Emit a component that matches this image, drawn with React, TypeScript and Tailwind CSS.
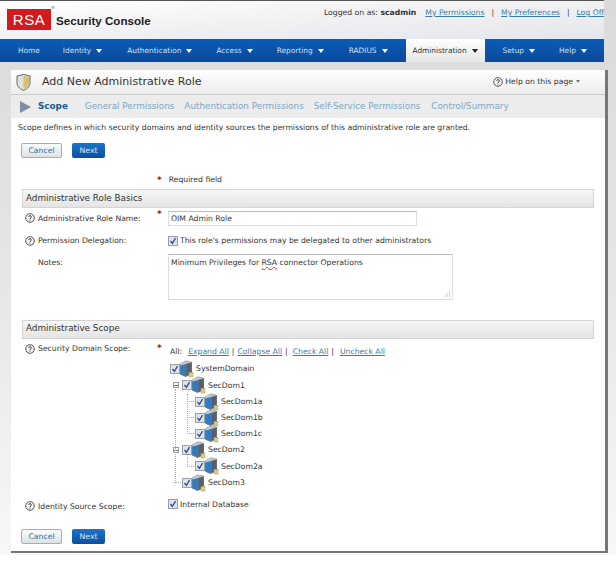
const font = "font-['DejaVu_Sans',Verdana,sans-serif]";

function Caret({ dark }: { dark?: boolean }) {
  return (
    <svg width="6" height="4" viewBox="0 0 6 4" className="ml-[5px]">
      <path d="M0 0h6L3 4z" fill={dark ? "#222" : "#fff"} />
    </svg>
  );
}

function NavItem({ label, caret = true, className }: { label: string; caret?: boolean; className: string }) {
  return (
    <div className={`flex items-center text-[7.4px] text-[#cfe0f2] ${className}`}>
      {label}
      {caret && <Caret />}
    </div>
  );
}

function HelpIcon() {
  return (
    <svg width="10" height="10" viewBox="0 0 10 10" className="shrink-0">
      <circle cx="5" cy="5" r="4.3" fill="#f4f4f4" stroke="#555" strokeWidth="1" />
      <path d="M3.6 3.8C3.7 2.3 6.4 2.3 6.4 3.8 6.4 4.8 5 4.8 5 6" fill="none" stroke="#444" strokeWidth="1" />
      <rect x="4.5" y="6.7" width="1" height="1" fill="#444" />
    </svg>
  );
}

function Check() {
  return (
    <span className="flex h-[10px] w-[10px] shrink-0 items-center justify-center border border-[#9a9ea5] bg-[#dfe3e8]">
      <svg width="8" height="8" viewBox="0 0 8 8">
        <path d="M1.500 4 3.400 6.400 6.500 1.200" fill="none" stroke="#2a4aa0" strokeWidth="1.300" />
      </svg>
    </span>
  );
}

function ServerIcon() {
  return (
    <svg width="15" height="18" viewBox="0 0 15 18" className="shrink-0 -ml-px">
      <path d="M1 3.500 7 0.500 13 2V14L6.500 17 1 14.500z" fill="#747b84" />
      <path d="M1.500 5.500 7 3.500V16L1.500 14z" fill="#2c7cc6" />
      <path d="M1 3.500 7 1 12.500 2.300 7 4 1.500 5.500z" fill="#c3c9cf" />
      <path d="M7.500 4 12.500 2.800V13.500L7.500 16z" fill="#59606a" />
      <rect x="10" y="12.500" width="4" height="4.500" fill="#ddcb8c" stroke="#a8985e" strokeWidth="0.500" />
    </svg>
  );
}

function Button({ label, primary }: { label: string; primary?: boolean }) {
  if (primary) {
    return (
      <div className="flex h-[15px] w-[33px] items-center justify-center rounded-[2px] bg-gradient-to-b from-[#1c74c9] to-[#0a4f9f] text-[7.7px] text-[#dce9f7]">
        {label}
      </div>
    );
  }
  return (
    <div className="flex h-[15px] w-[41px] items-center justify-center rounded-[2px] border border-[#a9adb0] bg-gradient-to-b from-[#fafafa] to-[#dfe2e4] text-[7.7px] text-[#2f6f9f]">
      {label}
    </div>
  );
}

function SectionBar({ title }: { title: string }) {
  return (
    <div className="ml-[11px] flex h-[19px] w-[572px] items-center border border-[#d4d4d4] bg-gradient-to-b from-[#f6f6f6] to-[#e4e4e4] pl-[3px] text-[8.8px] text-[#333]">
      {title}
    </div>
  );
}

function Star() {
  return <span className="text-[9px] leading-none font-bold text-[#9c1c1c]">*</span>;
}

function TreeRow({ label, indent, toggle, line }: { label: string; indent: string; toggle?: boolean; line?: boolean }) {
  return (
    <div className={`flex h-[16.2px] items-center ${indent}`}>
      {line && <span className="mr-[1px] w-[7px] border-t border-dotted border-[#aaa]" />}
      {toggle && (
        <span className="mr-[3px] flex h-[6px] w-[6px] items-center justify-center border border-[#999] bg-white">
          <span className="h-px w-[4px] bg-[#666]" />
        </span>
      )}
      <Check />
      <ServerIcon />
      <span className="ml-[2px] text-[7.700px] text-[#333]">{label}</span>
    </div>
  );
}

export default function App() {
  return (
    <div className={`${font} h-[565px] w-[616px] overflow-hidden bg-gradient-to-b from-[#dadada] via-[#e6e6e6] to-[#f8f8f8] text-[#333]`}>
      <div className="h-[39px] w-[604px] border-t border-[#555] bg-gradient-to-br from-white via-[#f1f1f3] to-[#e4e6ed]">
        <div className="flex h-full">
          <div className="ml-[7px] mt-[8px] flex h-[21px] w-[44px] items-center justify-center bg-[#d41a1f] font-['Liberation_Sans',Arial,sans-serif] text-[15px] leading-none tracking-[0.5px] text-white">
            RSA
          </div>
          <div className="mt-[5px] text-[4px] leading-none text-[#555]">®</div>
          <div className="ml-[1px] mt-[11px] font-['Liberation_Sans',Arial,sans-serif] text-[11.6px] font-bold text-[#222]">
            Security Console
          </div>
          <div className="ml-auto mt-[6px] flex gap-[7px] text-[7.7px] whitespace-nowrap">
            <span>
              Logged on as: <b>scadmin</b>
            </span>
            <span className="ml-[2px] text-[#3a7ca8] underline">My Permissions</span>
            <span>|</span>
            <span className="text-[#3a7ca8] underline">My Preferences</span>
            <span>|</span>
            <span className="text-[#3a7ca8] underline">Log Off</span>
          </div>
        </div>
      </div>

      <div className="flex h-[23px] w-[604px] bg-gradient-to-b from-[#0a5cb8] to-[#0b4a9a]">
        <NavItem label="Home" caret={false} className="ml-[18px]" />
        <NavItem label="Identity" className="ml-[23px]" />
        <NavItem label="Authentication" className="ml-[25px]" />
        <NavItem label="Access" className="ml-[24px]" />
        <NavItem label="Reporting" className="ml-[24px]" />
        <NavItem label="RADIUS" className="ml-[25px]" />
        <div className="ml-[18px] flex w-[79px] items-center justify-center bg-gradient-to-b from-white to-[#e6e6e6] text-[7.4px] text-[#333]">
          Administration
          <Caret dark />
        </div>
        <NavItem label="Setup" className="ml-[18px]" />
        <NavItem label="Help" className="ml-[24px]" />
      </div>

      <div className="pt-[8px] pl-[11px]">
        <div className="h-[483px] w-[597px] border-b-2 border-r-[3px] border-[#777] bg-white">
          <div className="flex h-[24px] items-center bg-gradient-to-b from-white to-[#ececec] pl-[5px] pr-[25px]">
            <svg width="15" height="17" viewBox="0 0 15 17">
              <path d="M1 2 7.500 0.500 14 2V9C14 13 10 15.500 7.500 16.500 5 15.500 1 13 1 9z" fill="#dfe1dd" stroke="#666" />
              <path d="M7.500 2 13 3V9C13 12 10 14.500 7.500 15.500z" fill="#d9c26e" />
            </svg>
            <span className="ml-[11px] text-[11px] text-[#333]">Add New Administrative Role</span>
            <div className="ml-auto flex items-center gap-[2px] text-[7.700px]">
              <HelpIcon />
              Help on this page
              <svg width="4" height="3" viewBox="0 0 4 3" className="ml-[1px]">
                <path d="M0 0h4L2 3z" fill="#777" />
              </svg>
            </div>
          </div>
          <div className="flex h-[24px] items-center border-t border-[#ccc] bg-[#ececec] pl-[9px] text-[8.800px] whitespace-nowrap text-[#7ba8c7]">
            <svg width="11" height="12" viewBox="0 0 11 12">
              <path d="M0 0 11 6 0 12z" fill="#7d8fa3" />
            </svg>
            <span className="ml-[7px] font-bold text-[#175b94]">Scope</span>
            <span className="ml-[17px]">General Permissions</span>
            <span className="ml-[10px]">Authentication Permissions</span>
            <span className="ml-[10px]">Self-Service Permissions</span>
            <span className="ml-[11px]">Control/Summary</span>
          </div>

          <div className="pl-[7px] pt-[4px] text-[7.700px] leading-[12px]">
            Scope defines in which security domains and identity sources the permissions of this administrative role
            are granted.
          </div>
          <div className="mt-[9px] flex gap-[10px] pl-[10px]">
            <Button label="Cancel" />
            <Button label="Next" primary />
          </div>

          <div className="mt-[15px] flex h-[14px] items-center pl-[146px] text-[7.700px]">
            <Star />
            <span className="ml-[7px]">Required field</span>
          </div>
          <div className="mt-[2px]">
            <SectionBar title="Administrative Role Basics" />
          </div>

          <div className="mt-[3px] grid grid-cols-[132px_11px_1fr] items-center pl-[14px] text-[7.700px]">
            <div className="flex items-center gap-[3px]">
              <HelpIcon />
              Administrative Role Name:
            </div>
            <div className="-mt-2">
              <Star />
            </div>
            <div className="flex h-[15px] w-[249px] items-center border border-[#ddd] border-t-[#bbb] px-[2px]">
              OIM Admin Role
            </div>
          </div>
          <div className="mt-[9px] grid grid-cols-[143px_1fr] items-center pl-[14px] text-[7.700px]">
            <div className="flex items-center gap-[3px]">
              <HelpIcon />
              Permission Delegation:
            </div>
            <div className="flex items-center gap-[2px]">
              <Check />
              This role's permissions may be delegated to other administrators
            </div>
          </div>
          <div className="mt-[7px] grid grid-cols-[143px_1fr] pl-[14px] text-[7.700px]">
            <div className="pl-[13px] pt-[3px]">Notes:</div>
            <div className="relative h-[46px] w-[285px] border border-[#ddd] border-t-[#bbb] p-[2px]">
              Minimum Privileges for{" "}
              <span className="underline decoration-wavy decoration-[#c33]">RSA</span> connector Operations
              <svg width="6" height="6" viewBox="0 0 6 6" className="absolute right-[2px] bottom-[2px]">
                <path d="M5.500 0.500V5.500M3.500 2.500V5.500M1.500 4.500V5.500" stroke="#aaa" strokeWidth="1" strokeDasharray="1 1" />
              </svg>
            </div>
          </div>

          <div className="mt-[20px]">
            <SectionBar title="Administrative Scope" />
          </div>

          <div className="mt-[5px] grid grid-cols-[132px_11px_1fr] pl-[14px] text-[7.700px]">
            <div className="flex h-[11px] items-center gap-[3px]">
              <HelpIcon />
              Security Domain Scope:
            </div>
            <div className="-mt-px">
              <Star />
            </div>
            <div>
              <div className="ml-[2px] flex items-center gap-[3px] pt-[2px] whitespace-nowrap">
                <span className="mr-[3px]">All:</span>
                <span className="text-[#3a7ca8] underline">Expand All</span>
                <span>|</span>
                <span className="text-[#3a7ca8] underline">Collapse All</span>
                <span>|</span>
                <span className="ml-[2px] text-[#3a7ca8] underline">Check All</span>
                <span>|</span>
                <span className="ml-[3px] text-[#3a7ca8] underline">Uncheck All</span>
              </div>
              <div className="relative mt-[4px]">
                <TreeRow label="SystemDomain" indent="ml-[2px]" />
                <TreeRow label="SecDom1" indent="ml-[5px]" toggle />
                <TreeRow label="SecDom1a" indent="ml-[19px]" line />
                <TreeRow label="SecDom1b" indent="ml-[19px]" line />
                <TreeRow label="SecDom1c" indent="ml-[19px]" line />
                <TreeRow label="SecDom2" indent="ml-[5px]" toggle />
                <TreeRow label="SecDom2a" indent="ml-[19px]" line />
                <TreeRow label="SecDom3" indent="ml-[6px]" line />
                <span className="absolute left-[7px] top-[28px] h-[94px] border-l border-dotted border-[#aaa]" />
                <span className="absolute left-[19px] top-[33px] h-[40px] border-l border-dotted border-[#aaa]" />
                <span className="absolute left-[19px] top-[96px] h-[10px] border-l border-dotted border-[#aaa]" />
              </div>
            </div>
          </div>

          <div className="mt-[10px] grid grid-cols-[143px_1fr] items-center pl-[14px] text-[7.700px]">
            <div className="flex items-center gap-[3px]">
              <HelpIcon />
              Identity Source Scope:
            </div>
            <div className="-mt-[4px] flex items-center gap-[2px]">
              <Check />
              Internal Database
            </div>
          </div>
          <div className="mt-[17px] flex gap-[10px] pl-[10px]">
            <Button label="Cancel" />
            <Button label="Next" primary />
          </div>
        </div>
      </div>
      <div className="mt-[2px] h-[12px] bg-white" />
    </div>
  );
}
